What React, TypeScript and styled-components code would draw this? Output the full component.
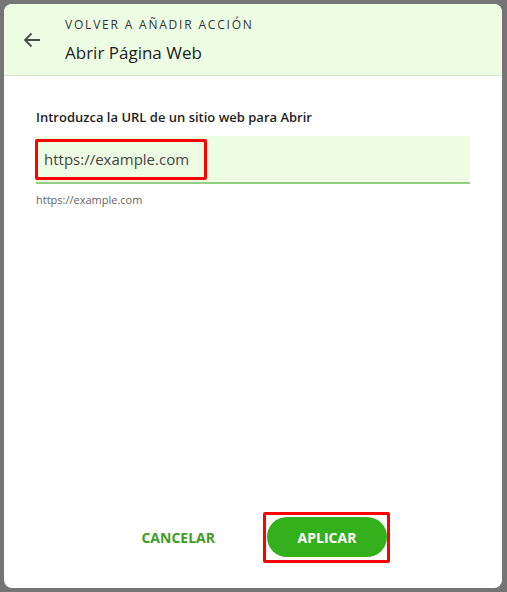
import React from "react";
import styled, { createGlobalStyle } from "styled-components";

const Global = createGlobalStyle`
  html, body { margin: 0; padding: 0; background: #757575; }
  body { font-family: "Segoe UI", "Open Sans", "Noto Sans", sans-serif; }
  * { box-sizing: border-box; }
`;

const Page = styled.div`
  width: 507px;
  height: 592px;
  padding: 4px 5px 4px 4px;
  display: flex;
`;

const Dialog = styled.div`
  flex: 1;
  background: #ffffff;
  border-radius: 8px;
  overflow: hidden;
  display: flex;
  flex-direction: column;
`;

const Header = styled.div`
  background: #edfde4;
  border-bottom: 1px solid #d6e6cf;
  height: 72px;
  flex-shrink: 0;
  display: flex;
  align-items: center;
  padding-left: 18px;
  gap: 23px;
`;

const BackButton = styled.button`
  border: none;
  background: transparent;
  padding: 0;
  width: 20px;
  height: 20px;
  margin-top: 1px;
  display: flex;
  align-items: center;
  justify-content: center;
  color: #4a4a4a;
  cursor: pointer;
`;

const HeaderText = styled.div`
  display: flex;
  flex-direction: column;
  gap: 9px;
  padding-top: 1px;
`;

const Eyebrow = styled.div`
  font-size: 12px;
  letter-spacing: 1.8px;
  color: #333;
  line-height: 16px;
`;

const Title = styled.div`
  font-size: 17px;
  color: #1e1e1e;
  line-height: 22px;
`;

const Body = styled.div`
  flex: 1;
  padding: 32px 32px 0 32px;
  display: flex;
  flex-direction: column;
`;

const Label = styled.div`
  font-size: 13px;
  font-weight: 600;
  color: #1f1f1f;
  line-height: 18px;
`;

const Field = styled.div`
  margin-top: 10px;
  height: 48px;
  background: #edfde4;
  border-bottom: 2px solid #93cf80;
  display: flex;
  align-items: center;
`;

const Highlight = styled.span<{ $pad: string; $shift?: number }>`
  border: 3px solid #ff0000;
  border-radius: 2px;
  display: inline-flex;
  align-items: center;
  padding: ${(p) => p.$pad};
  margin-left: ${(p) => p.$shift ?? 0}px;
`;

const FieldValue = styled.span`
  font-size: 15px;
  color: #444;
  line-height: 20px;
`;

const Helper = styled.div`
  margin-top: 8px;
  font-size: 11px;
  color: #666;
  line-height: 16px;
`;

const Footer = styled.div`
  flex-shrink: 0;
  display: flex;
  align-items: center;
  justify-content: flex-end;
  padding: 0 112px 25px 0;
  gap: 48px;
`;

const TextButton = styled.button`
  border: none;
  background: transparent;
  color: #3f9c25;
  font-family: inherit;
  font-weight: 700;
  font-size: 14px;
  padding: 6px 0;
  cursor: pointer;
`;

const PrimaryButton = styled.button`
  border: none;
  background: #34b01c;
  color: #fff;
  font-family: inherit;
  font-weight: 700;
  font-size: 14px;
  width: 120px;
  height: 40px;
  border-radius: 20px;
  cursor: pointer;
`;

export default function App() {
  return (
    <>
      <Global />
      <Page>
        <Dialog>
          <Header>
            <BackButton aria-label="back">
              <svg width="18" height="16" viewBox="0 0 18 16" fill="none" stroke="#4a4a4a" strokeWidth="1.8">
                <path d="M17 8H2" />
                <path d="M8.5 1.5L2 8l6.5 6.5" />
              </svg>
            </BackButton>
            <HeaderText>
              <Eyebrow>VOLVER A AÑADIR ACCIÓN</Eyebrow>
              <Title>Abrir Página Web</Title>
            </HeaderText>
          </Header>
          <Body>
            <Label>Introduzca la URL de un sitio web para Abrir</Label>
            <Field>
              <Highlight $pad="7px 15px 8px 6px" $shift={-1}>
                <FieldValue>https://example.com</FieldValue>
              </Highlight>
            </Field>
            <Helper>https://example.com</Helper>
          </Body>
          <Footer>
            <TextButton>CANCELAR</TextButton>
            <Highlight $pad="2px 0 3px 1px">
              <PrimaryButton>APLICAR</PrimaryButton>
            </Highlight>
          </Footer>
        </Dialog>
      </Page>
    </>
  );
}
